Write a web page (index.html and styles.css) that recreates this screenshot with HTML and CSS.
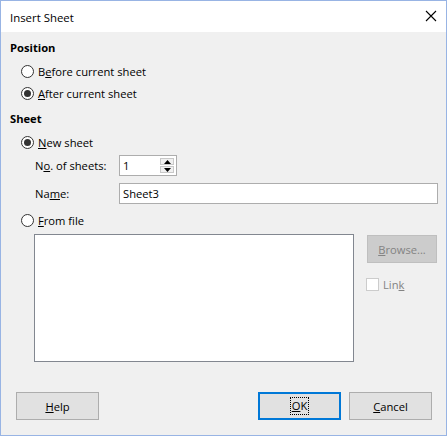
FILE: index.html
```html
<!DOCTYPE html>
<html>
<head>
<meta charset="utf-8">
<link rel="stylesheet" href="styles.css">
</head>
<body>
<div class="window">
  <div class="titlebar">
    <span class="title">Insert Sheet</span>
    <svg class="close" width="12" height="12" viewBox="0 0 12 12"><path d="M1 1 L11 11 M11 1 L1 11" stroke="#000" stroke-width="1.1" fill="none"/></svg>
  </div>
  <div class="content">
    <div class="heading pos-heading">Position</div>
    <label class="radio-row r1"><span class="radio"></span><span>B<u>e</u>fore current sheet</span></label>
    <label class="radio-row r2"><span class="radio checked"></span><span><u>A</u>fter current sheet</span></label>
    <div class="heading sheet-heading">Sheet</div>
    <label class="radio-row r3"><span class="radio checked"></span><span><u>N</u>ew sheet</span></label>
    <div class="fields">
      <span class="lbl">N<u>o</u>. of sheets:</span>
      <div class="spin">
        <span class="spin-val">1</span>
        <div class="spin-btns">
          <span class="sb"><svg width="7" height="4" viewBox="0 0 7 4"><path d="M3.5 0 L7 4 L0 4 Z" fill="#000"/></svg></span>
          <span class="sb"><svg width="7" height="4" viewBox="0 0 7 4"><path d="M0 0 L7 0 L3.5 4 Z" fill="#000"/></svg></span>
        </div>
      </div>
      <span class="lbl">Na<u>m</u>e:</span>
      <div class="textbox">Sheet3</div>
    </div>
    <label class="radio-row r4"><span class="radio"></span><span><u>F</u>rom file</span></label>
    <div class="file-area">
      <div class="file-list"></div>
      <div class="file-side">
        <div class="btn disabled"><span><u>B</u>rowse...</span></div>
        <label class="check-row"><span class="check"></span><span>Lin<u>k</u></span></label>
      </div>
    </div>
  </div>
  <div class="buttons">
    <div class="btn"><span><u>H</u>elp</span></div>
    <div class="spacer"></div>
    <div class="btn default"><span class="focus"><u>O</u>K</span></div>
    <div class="btn"><span><u>C</u>ancel</span></div>
  </div>
</div>
</body>
</html>
```

FILE: styles.css
```css
html, body {
  margin: 0;
  padding: 0;
  background: #f0f0f0;
}
body {
  font-family: "Segoe UI", "Open Sans", "Noto Sans", sans-serif;
  font-size: 11.2px;
  color: #000;
}
u { text-decoration: underline; text-underline-offset: 1px; }
.window {
  width: 447px;
  height: 436px;
  box-sizing: border-box;
  border: 1px solid #98b4e4;
  background: #f0f0f0;
  display: flex;
  flex-direction: column;
}
.titlebar {
  height: 31px;
  background: #fff;
  display: flex;
  align-items: center;
  justify-content: space-between;
  padding: 0 9px 0 9px;
  flex-shrink: 0;
}
.title { font-size: 11.4px; margin-top: 1px; }
.close { margin-top: -1px; }
.content {
  padding: 0 8px 0 9px;
  display: flex;
  flex-direction: column;
}
.heading {
  font-weight: bold;
  height: 16px;
  line-height: 16px;
}
.pos-heading { margin-top: 8px; }
.sheet-heading { margin-top: 7px; }
.radio-row {
  display: flex;
  align-items: center;
  height: 22px;
  gap: 4px;
  padding-left: 11px;
}
.r1 { margin-top: 4px; }
.r3 { margin-top: 4px; }
.r4 { margin-top: 5px; }
.radio {
  width: 13px;
  height: 13px;
  box-sizing: border-box;
  border: 1px solid #333;
  border-radius: 50%;
  background: #fff;
  display: flex;
  align-items: center;
  justify-content: center;
}
.radio.checked::after {
  content: "";
  width: 7px;
  height: 7px;
  border-radius: 50%;
  background: #333;
}
.fields {
  display: grid;
  grid-template-columns: 84px 1fr;
  row-gap: 7px;
  align-items: center;
  padding-left: 25px;
  margin-top: 2px;
}
.spin {
  width: 58px;
  height: 21px;
  box-sizing: border-box;
  border: 1px solid #adadad;
  background: #fff;
  display: flex;
  align-items: center;
  justify-content: space-between;
  padding: 0 2px 0 3px;
}
.spin-btns {
  display: flex;
  flex-direction: column;
  gap: 1px;
}
.sb {
  width: 14px;
  height: 7px;
  box-sizing: border-box;
  border: 1px solid #c8c8c8;
  background: #f0f0f0;
  display: flex;
  align-items: center;
  justify-content: center;
}
.textbox {
  height: 21px;
  box-sizing: border-box;
  border: 1px solid #adadad;
  background: #fff;
  display: flex;
  align-items: center;
  padding-left: 3px;
}
.file-area {
  display: flex;
  gap: 13px;
  padding-left: 24px;
  margin-top: 3px;
}
.file-list {
  width: 320px;
  height: 128px;
  box-sizing: border-box;
  border: 1px solid #828790;
  background: #fff;
}
.file-side {
  display: flex;
  flex-direction: column;
  padding-top: 1px;
}
.btn {
  width: 83px;
  height: 28px;
  box-sizing: border-box;
  border: 1px solid #adadad;
  background: #e1e1e1;
  display: flex;
  align-items: center;
  justify-content: center;
}
.btn.disabled {
  width: 70px;
  background: #cccccc;
  border-color: #bfbfbf;
  color: #838383;
}
.btn.default {
  border: 2px solid #0078d7;
}
.focus {
  outline: 1px dotted #000;
  padding: 0 1px;
  line-height: 16px;
}
.check-row {
  display: flex;
  align-items: center;
  gap: 4px;
  margin-top: 14px;
  color: #838383;
  margin-left: -1px;
}
.check {
  width: 13px;
  height: 13px;
  box-sizing: border-box;
  border: 1px solid #cccccc;
  background: #fff;
}
.buttons {
  display: flex;
  gap: 8px;
  padding: 0 14px 0 15px;
  margin-top: 30px;
}
.spacer { flex: 1; }
```
